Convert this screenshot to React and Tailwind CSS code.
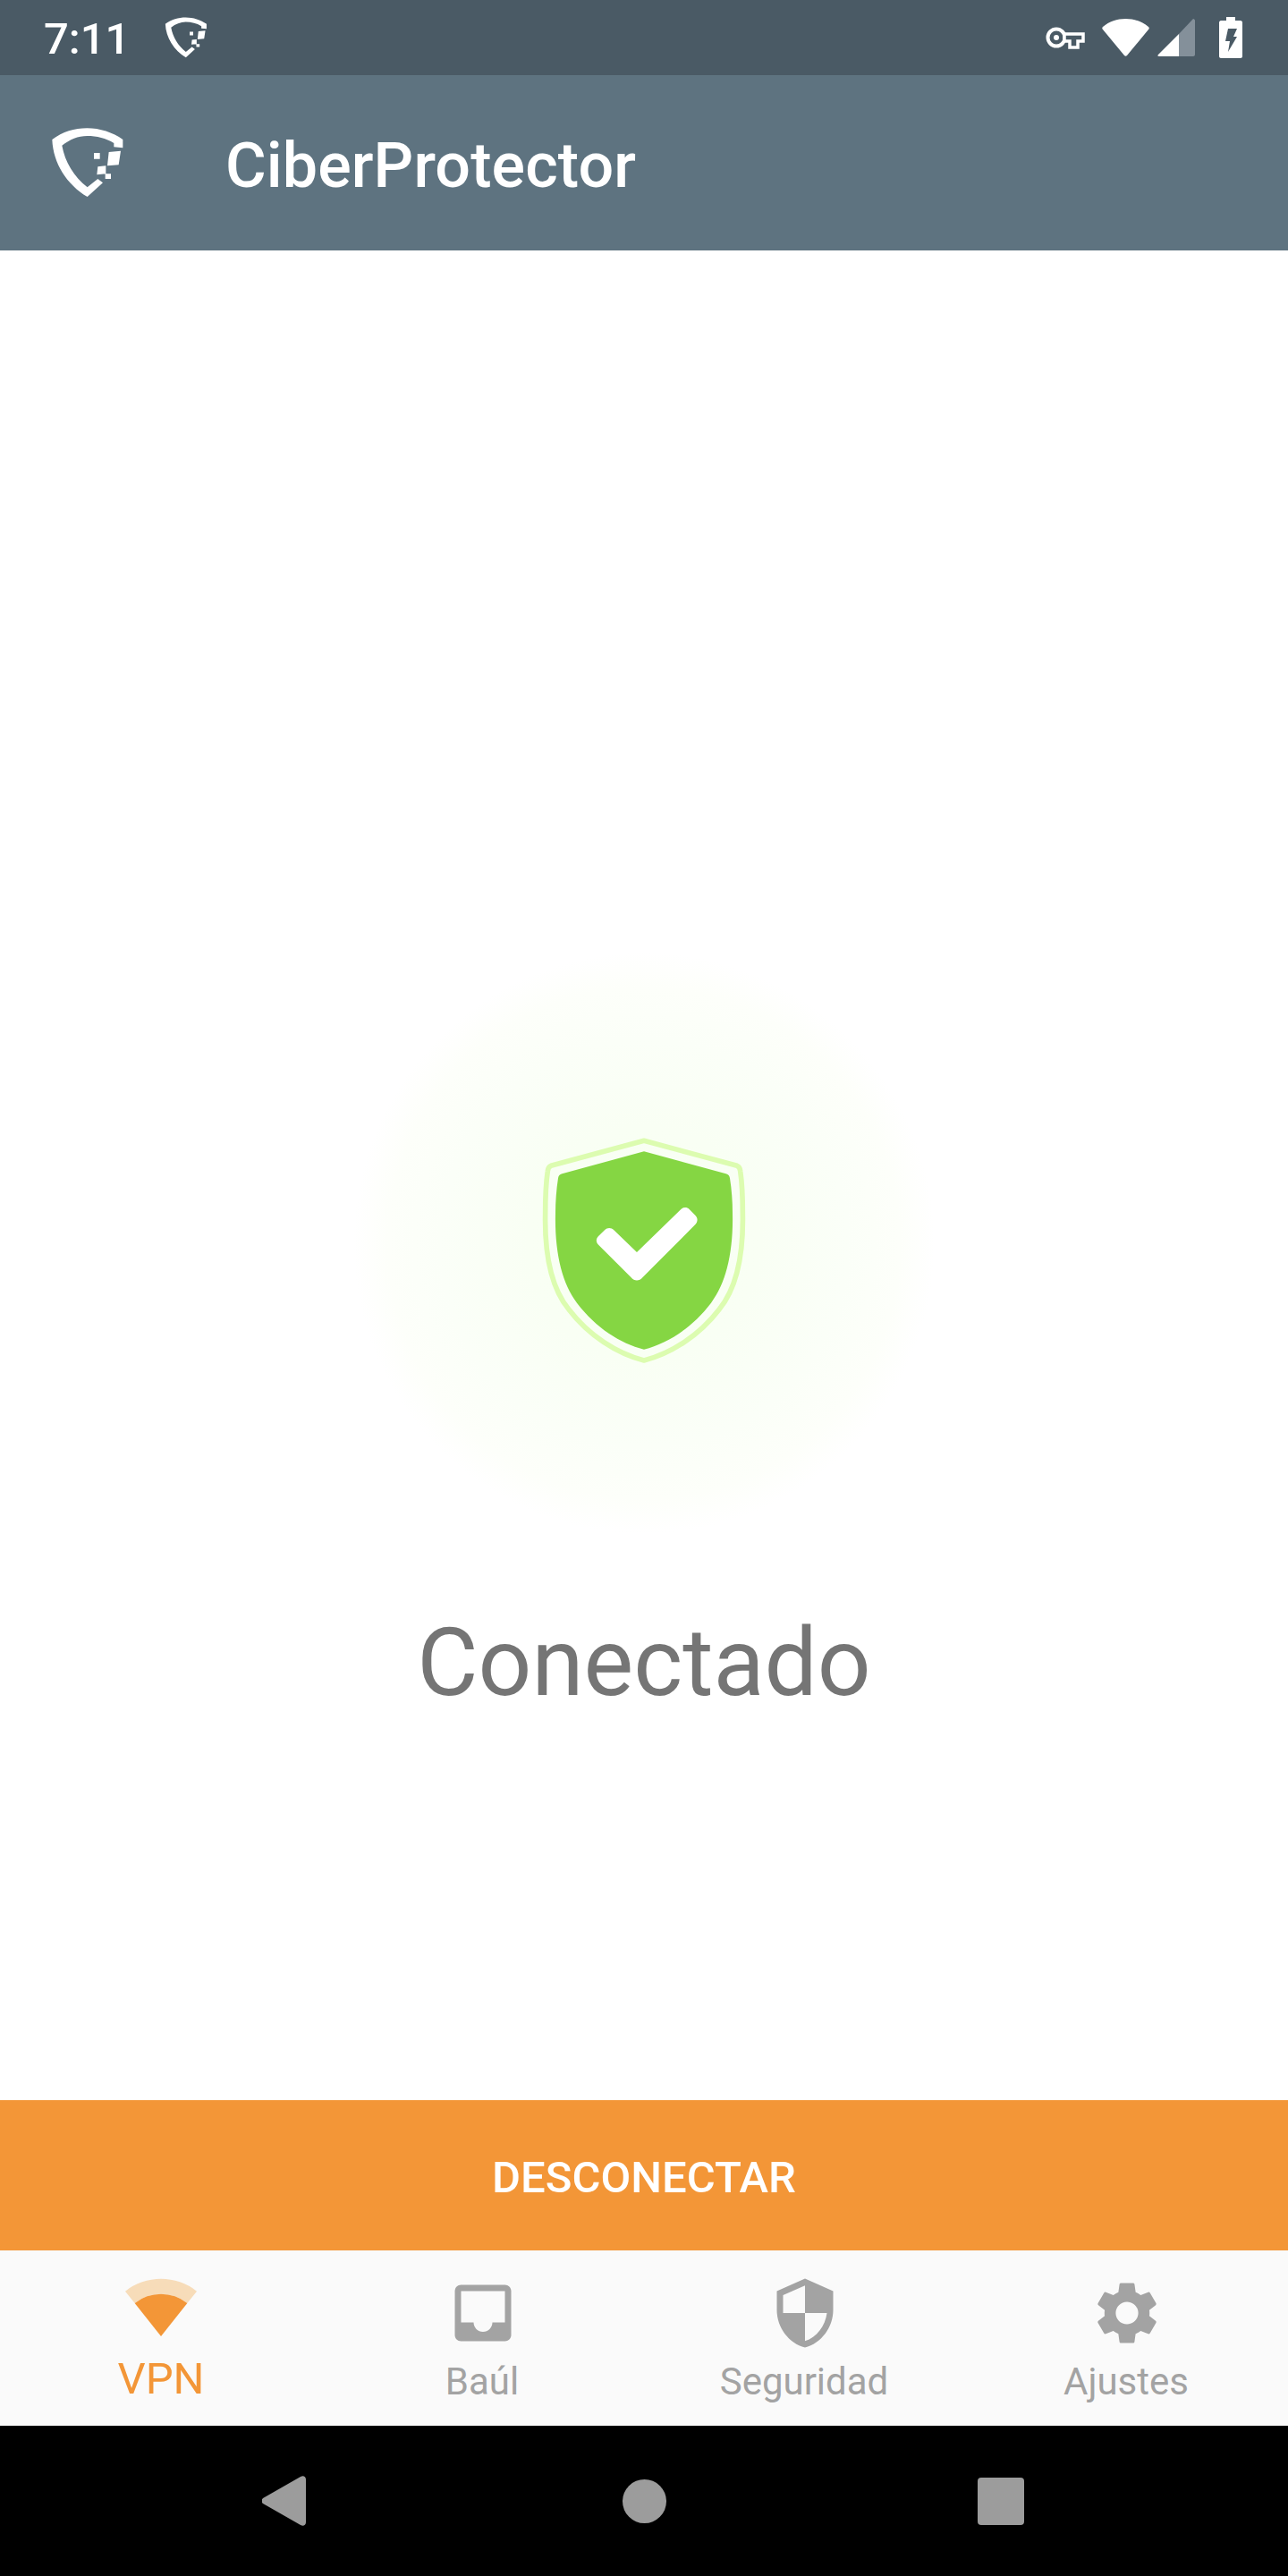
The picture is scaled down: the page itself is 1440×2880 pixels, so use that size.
const Logo = ({ className }) => (
  <svg viewBox="0 0 288 276" className={className} fill="#fff">
    <path d="M25 60C60 34 100 22 142 22C185 22 228 36 262 60L262 88L232 85L232 72C205 56 175 48 142 48C112 48 84 60 58 80C68 135 98 185 143 220L178 192L195 205L143 252C75 212 28 140 25 60Z" />
    <path d="M165 105H185V125H165ZM215 102L255 98L248 145L210 148ZM178 151L205 148V175L175 178ZM203 175H222V192H203Z" />
  </svg>
);

const tabs = [
  {
    label: "VPN",
    active: true,
    icon: (
      <svg viewBox="24 12 252 252" className="w-[84px] h-[84px]">
        <path d="M30 65A194 194 0 0 1 270 65L238 105A141 141 0 0 0 62 105Z" fill="#f7dcb9" />
        <path d="M62 105A141 141 0 0 1 238 105L150 216Z" fill="#f39637" />
      </svg>
    ),
  },
  {
    label: "Baúl",
    icon: (
      <svg viewBox="0 0 24 24" className="w-[84px] h-[84px]" fill="#a3a3a3">
        <path d="M19 3H4.99c-1.11 0-1.98.89-1.98 2L3 19c0 1.1.88 2 1.99 2H19c1.1 0 2-.9 2-2V5c0-1.11-.9-2-2-2zm0 12h-4c0 1.66-1.35 3-3 3s-3-1.34-3-3H4.99V5H19v10z" />
      </svg>
    ),
  },
  {
    label: "Seguridad",
    icon: (
      <svg viewBox="0 0 24 24" className="w-[84px] h-[84px]" fill="#a3a3a3">
        <path d="M12 1L3 5v6c0 5.55 3.84 10.74 9 12 5.16-1.26 9-6.45 9-12V5l-9-4zm0 10.99h7c-.53 4.12-3.28 7.79-7 8.94V12H5V6.3l7-3.11v8.8z" />
      </svg>
    ),
  },
  {
    label: "Ajustes",
    icon: (
      <svg viewBox="0 0 24 24" className="w-[84px] h-[84px]" fill="#a3a3a3">
        <path d="M19.14 12.94c.04-.3.06-.61.06-.94 0-.32-.02-.64-.07-.94l2.03-1.58c.18-.14.23-.41.12-.61l-1.92-3.32c-.12-.22-.37-.29-.59-.22l-2.39.96c-.5-.38-1.03-.7-1.62-.94l-.36-2.54c-.04-.24-.24-.41-.48-.41h-3.84c-.24 0-.43.17-.47.41l-.36 2.54c-.59.24-1.13.57-1.62.94l-2.39-.96c-.22-.08-.47 0-.59.22L2.74 8.87c-.12.21-.08.47.12.61l2.03 1.58c-.05.3-.09.63-.09.94s.02.64.07.94l-2.03 1.58c-.18.14-.23.41-.12.61l1.92 3.32c.12.22.37.29.59.22l2.39-.96c.5.38 1.03.7 1.62.94l.36 2.54c.05.24.24.41.48.41h3.84c.24 0 .44-.17.47-.41l.36-2.54c.59-.24 1.13-.56 1.62-.94l2.39.96c.22.08.47 0 .59-.22l1.92-3.32c.12-.22.07-.47-.12-.61l-2.01-1.58zM12 15.6c-1.98 0-3.6-1.62-3.6-3.6s1.62-3.6 3.6-3.6 3.6 1.62 3.6 3.6-1.62 3.6-3.6 3.6z" />
      </svg>
    ),
  },
];

export default function App() {
  return (
    <div className="w-[1440px] h-[2880px] flex flex-col bg-white font-['Roboto',sans-serif]">
      {/* STATUS BAR */}
      <div className="h-[84px] shrink-0 bg-[#4a5a65] flex items-center pl-[49px] text-white">
        <span className="text-[49px] leading-[84px] font-medium mt-[3px]">7:11</span>
        <Logo className="w-[56px] h-[54px] ml-[35px] -mt-[1px]" />
        <div className="ml-auto flex items-center">
          <svg viewBox="0 0 44 25" className="w-[44px] h-[25px]" fill="none">
            <circle cx="12" cy="12" r="9.5" stroke="#fff" strokeWidth="4" />
            <circle cx="12" cy="12" r="3" fill="#fff" />
            <path d="M21 8H42V16H36V23H27V16H21Z" stroke="#fff" strokeWidth="3.5" fill="#4a5a65" />
          </svg>
          <svg viewBox="0 0 53 42" className="w-[53px] h-[42px] ml-[19px]" fill="#fff">
            <path d="M1 9C8 3 17 0 26.5 0S45 3 52 9C53 10 53 11 52 12L28 41C27 42 26 42 25 41L1 12C0 11 0 10 1 9Z" />
          </svg>
          <svg viewBox="0 0 42 42" className="w-[42px] h-[42px] ml-[9px]">
            <path d="M24 17L40 0C41 0 42 1 42 2V40C42 41 41 42 40 42H24Z" fill="#84909a" />
            <path d="M24 17V42H2C0 42 0 41 1 40Z" fill="#fff" />
          </svg>
          <svg viewBox="0 0 26 46" className="w-[26px] h-[46px] ml-[27px] mr-[51px]">
            <path d="M8 0H18V4H24C25 4 26 5 26 6V44C26 45 25 46 24 46H2C1 46 0 45 0 44V6C0 5 1 4 2 4H8Z" fill="#fff" />
            <path d="M10 13H20L16 22H20L10 39L12 27H7Z" fill="#4a5a65" />
          </svg>
        </div>
      </div>

      {/* APP BAR */}
      <header className="h-[196px] shrink-0 bg-[#5e7380] flex items-center pl-[50px] text-white">
        <Logo className="w-[96px] h-[92px]" />
        <h1 className="ml-[106px] text-[70px] leading-none font-medium tracking-[0.1px] mt-[6px]">CiberProtector</h1>
      </header>

      {/* STATUS */}
      <main className="flex-1 flex flex-col items-center">
        <div className="mt-[785px] w-[650px] h-[650px] rounded-full bg-[radial-gradient(circle_closest-side,#f8fff2_0%,#f9fff4_40%,#fbfff8_70%,#fdfffa_88%,#ffffff_100%)] flex items-center justify-center">
          <svg viewBox="0 0 900 900" className="w-[300px] h-[300px]">
            <path
              d="M450 106L762 190C770 193 772 198 773 208C780 255 781 310 781 350C784 495 757 605 702 672C635 760 540 820 450 843C360 820 265 760 198 672C143 605 116 495 119 350C119 310 120 255 127 208C128 198 130 193 138 190Z"
              fill="none"
              stroke="#dcfcb0"
              strokeWidth="17"
              strokeLinejoin="round"
            />
            <path
              d="M450 142L725 217C733 220 737 224 738 232C744 270 747 310 747 350C750 480 725 585 675 650C610 735 530 785 450 806C370 785 290 735 225 650C175 585 150 480 153 350C153 310 156 270 162 232C163 224 167 220 175 217Z"
              fill="#85d643"
            />
            <path
              d="M426 480L574 336C582 328 594 328 602 336L622 356C631 365 631 378 622 387L445 565C434 578 418 578 407 565L298 456C288 446 288 434 298 425L318 406C327 397 340 397 349 406Z"
              fill="#fff"
            />
          </svg>
        </div>
        <p className="mt-[92px] text-[105px] leading-none text-[#757575]">Conectado</p>
      </main>

      {/* DISCONNECT */}
      <button className="h-[168px] shrink-0 bg-[#f39637] text-white text-[49px] font-medium pt-[5px]">DESCONECTAR</button>

      {/* TABS */}
      <nav className="h-[196px] shrink-0 bg-[#fafafa] grid grid-cols-4">
        {tabs.map((tab) => (
          <div key={tab.label} className="flex flex-col items-center pt-[28px]">
            {tab.icon}
            <span
              className={`leading-[56px] ${
                tab.active ? "text-[49px] mt-[4px] text-[#f39637]" : "text-[42px] mt-[7px] -ml-[2px] text-[#a3a3a3]"
              }`}
            >
              {tab.label}
            </span>
          </div>
        ))}
      </nav>

      {/* SYSTEM NAV */}
      <div className="h-[168px] shrink-0 bg-black flex items-center pl-[293px]">
        <svg viewBox="0 0 49 56" className="w-[49px] h-[56px]" fill="#9c9c9c">
          <path d="M1 25L43 1C46 -1 49 1 49 4V52C49 55 46 57 43 55L1 31C-1 29 -1 27 1 25Z" />
        </svg>
        <div className="ml-[354px] w-[49px] h-[49px] rounded-full bg-[#9c9c9c]" />
        <div className="ml-[348px] w-[52px] h-[53px] rounded-[4px] bg-[#9c9c9c]" />
      </div>
    </div>
  );
}
